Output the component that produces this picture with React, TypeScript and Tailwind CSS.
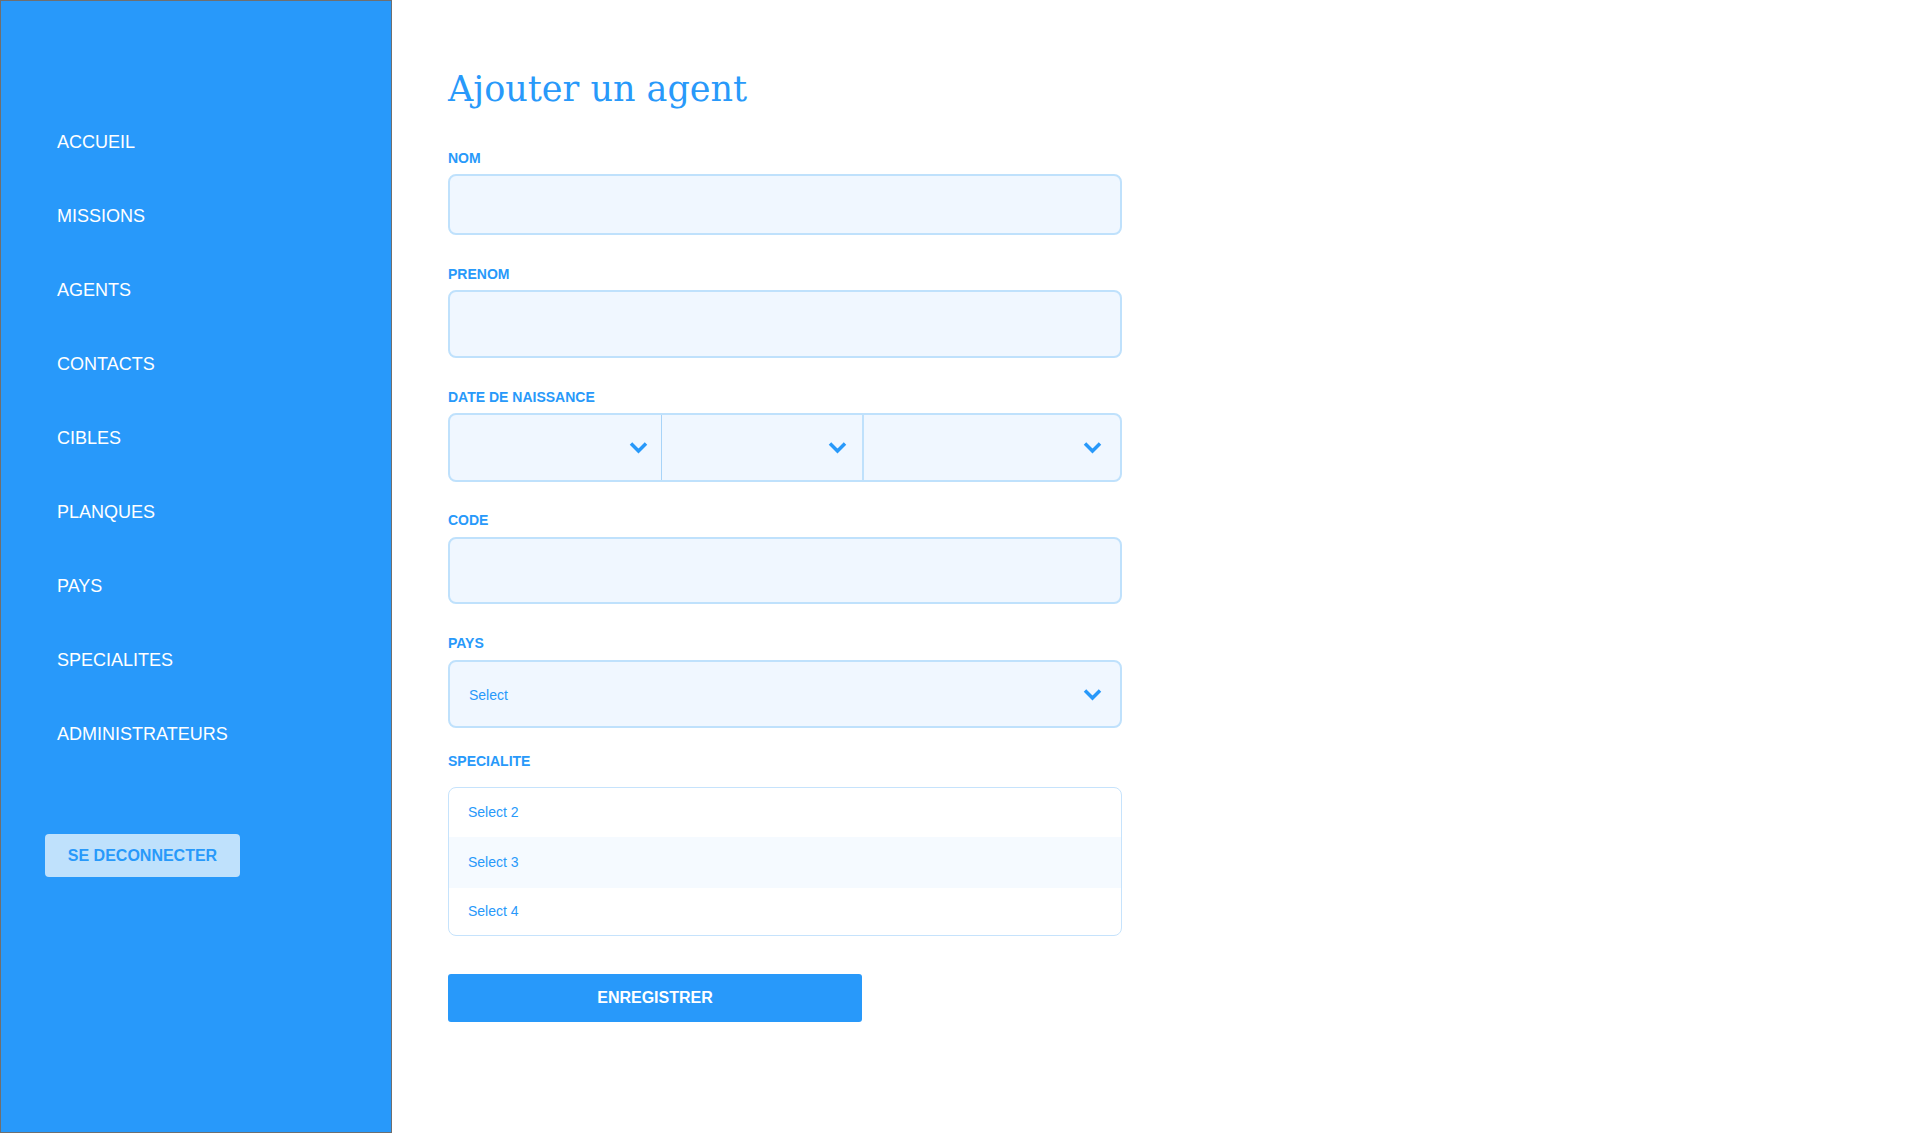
const navItems = [
  "ACCUEIL",
  "MISSIONS",
  "AGENTS",
  "CONTACTS",
  "CIBLES",
  "PLANQUES",
  "PAYS",
  "SPECIALITES",
  "ADMINISTRATEURS",
];

function Chevron() {
  return (
    <svg width="19" height="13" viewBox="0 0 19 13" fill="none">
      <path d="M2 2.5 L9.5 10 L17 2.5" stroke="#2899fa" strokeWidth="3.5" strokeLinejoin="miter" />
    </svg>
  );
}

function Label({ text, className }: { text: string; className: string }) {
  return <div className={"text-[14px] leading-[16px] font-bold text-[#2899fa] " + className}>{text}</div>;
}

export default function App() {
  return (
    <div className="flex w-full min-h-[1135px] bg-white font-['Liberation_Sans',Arial,sans-serif]">
      {/* sidebar */}
      <aside className="w-[392px] h-[1133px] shrink-0 border border-[#6f6f6f] bg-[#2899fa] pt-[104px]">
        <nav className="flex flex-col pl-[56px]">
          {navItems.map((item) => (
            <a key={item} href="#" className="h-[74px] flex items-center text-[18px] leading-[20px] text-white">
              {item}
            </a>
          ))}
        </nav>
        <div className="pl-[44px] mt-[63px]">
          <button className="w-[195px] h-[43px] rounded-[4px] bg-[#bfe1fc] text-[#2899fa] text-[16px] font-bold leading-[18px]">
            SE DECONNECTER
          </button>
        </div>
      </aside>

      {/* form */}
      <main className="flex-1 pl-[56px] pt-[69px]">
        <h1 className="h-[40px] text-[35px] leading-[40px] text-[#2899fa] font-['DejaVu_Serif',Georgia,serif]">
          Ajouter un agent
        </h1>

        <div className="w-[674px] flex flex-col">
          <Label text="NOM" className="mt-[41px]" />
          <input className="mt-[8px] h-[61px] rounded-[8px] border-2 border-[#bfe1fc] bg-[#f0f7ff] outline-none" />

          <Label text="PRENOM" className="mt-[31px]" />
          <input className="mt-[8px] h-[68px] rounded-[8px] border-2 border-[#bfe1fc] bg-[#f0f7ff] outline-none" />

          <Label text="DATE DE NAISSANCE" className="mt-[31px]" />
          <div className="mt-[8px] h-[69px] flex rounded-[8px] border-2 border-[#bfe1fc] bg-[#f0f7ff]">
            <div className="w-[212px] border-r border-[#a8d4f8] flex items-center justify-end pr-[13px]">
              <Chevron />
            </div>
            <div className="w-[202px] border-r-2 border-[#bfe1fc] flex items-center justify-end pr-[15px]">
              <Chevron />
            </div>
            <div className="flex-1 flex items-center justify-end pr-[18px]">
              <Chevron />
            </div>
          </div>

          <Label text="CODE" className="mt-[30px]" />
          <input className="mt-[9px] h-[67px] rounded-[8px] border-2 border-[#bfe1fc] bg-[#f0f7ff] outline-none" />

          <Label text="PAYS" className="mt-[31px]" />
          <div className="mt-[9px] h-[68px] flex items-center justify-between rounded-[8px] border-2 border-[#bfe1fc] bg-[#f0f7ff] pl-[19px] pr-[18px]">
            <span className="text-[14px] text-[#2899fa] pt-[2px]">Select</span>
            <Chevron />
          </div>

          <Label text="SPECIALITE" className="mt-[25px]" />
          <div className="mt-[18px] h-[149px] flex flex-col rounded-[8px] border border-[#c6e3fc] bg-white overflow-hidden">
            <div className="h-[49px] flex items-center pl-[19px] text-[14px] text-[#2899fa]">Select 2</div>
            <div className="h-[51px] flex items-center pl-[19px] text-[14px] text-[#2899fa] bg-[#f5faff]">Select 3</div>
            <div className="flex-1 flex items-center pl-[19px] text-[14px] text-[#2899fa]">Select 4</div>
          </div>

          <button className="mt-[38px] w-[414px] h-[48px] rounded-[3px] bg-[#2899fa] text-white text-[16px] font-bold">
            ENREGISTRER
          </button>
        </div>
      </main>
    </div>
  );
}
